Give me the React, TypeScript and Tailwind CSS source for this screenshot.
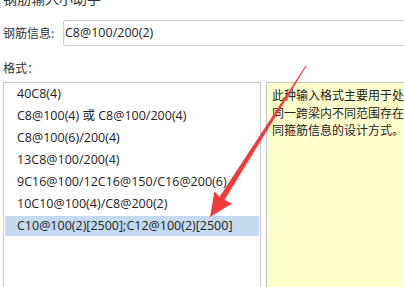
import React from "react";

const items = [
  "40C8(4)",
  "C8@100(4) 或 C8@100/200(4)",
  "C8@100(6)/200(4)",
  "13C8@100/200(4)",
  "9C16@100/12C16@150/C16@200(6)",
  "10C10@100(4)/C8@200(2)",
  "C10@100(2)[2500];C12@100(2)[2500]",
];

const latin = { fontFamily: '"Open Sans","Noto Sans CJK SC",sans-serif' };
const cjk = { fontFamily: '"Noto Sans CJK SC",sans-serif' };

export default function App() {
  return (
    <div className="relative w-[404px] h-[287px] overflow-hidden bg-white text-[#222]">
      <div className="flex flex-col w-[520px]">
        <div className="pl-[3px] -mt-[10px] h-[16px] leading-[16px] text-[14px] text-[#333]" style={cjk}>
          钢筋输入小助手
        </div>
        <div className="flex items-center mt-[14px] pl-[3px]">
          <div className="w-[60px] text-[12px] text-[#333]" style={cjk}>钢筋信息:</div>
          <div className="w-[400px] h-[26px] border border-[#cfcfcf] rounded-[2px] flex items-center pl-[1px] text-[12.5px]" style={latin}>
            C8@100/200(2)
          </div>
        </div>
        <div className="pl-[3px] mt-[13px] h-[17px] leading-[17px] text-[12px] text-[#333]" style={cjk}>
          格式：
        </div>
        <div className="flex mt-[6px] h-[230px]">
          <div className="ml-[3px] w-[258px] border border-[#c9c9c9] bg-white pt-px px-px">
            {items.map((t, i) => (
              <div
                key={i}
                className={`h-[20px] mb-[2px] flex items-center pl-[12px] text-[12.5px] whitespace-nowrap ${i === 6 ? "bg-[#c5daf0]" : ""}`}
                style={latin}
              >
                {t}
              </div>
            ))}
          </div>
          <div className="ml-[5px] w-[220px] border border-[#c4c4c4] bg-[#ffffcd] pl-[5px] pt-[3px]">
            <div className="w-[150px] text-[12px] leading-[17.5px] text-[#222]" style={cjk}>
              此种输入格式主要用于处理同一跨梁内不同范围存在不同箍筋信息的设计方式。
            </div>
          </div>
        </div>
      </div>
      <svg className="absolute left-0 top-0 pointer-events-none" width="404" height="287">
        <polygon
          fill="#f23a3a"
          points="306.4,66.3 224.4,199.9 232,203.5 210,217 214.5,191.3 219.4,196.9 305.6,65.7"
        />
      </svg>
    </div>
  );
}
